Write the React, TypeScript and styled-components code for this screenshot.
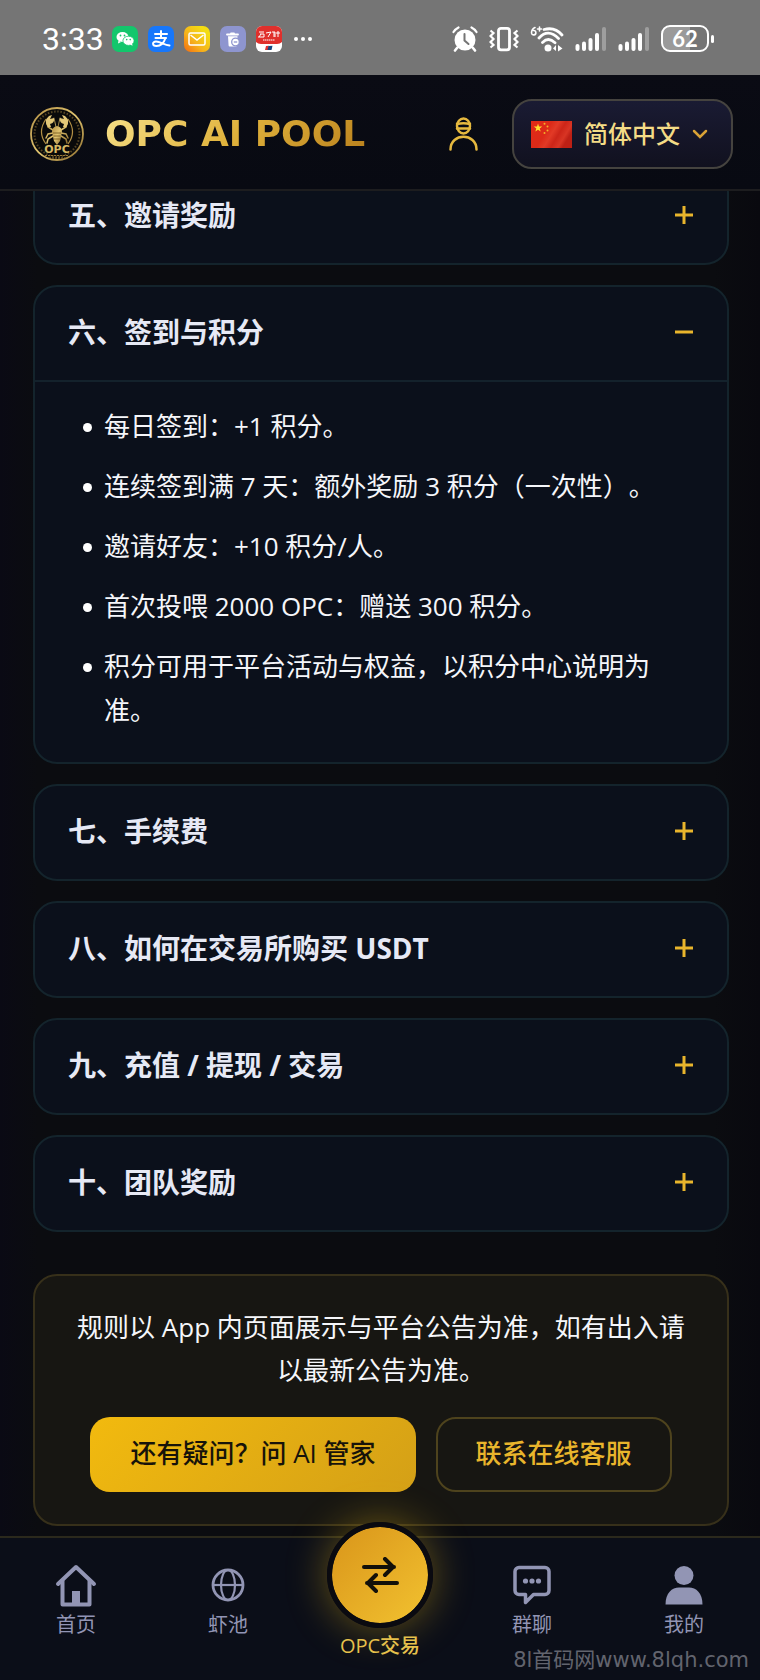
import React, { useState } from 'react';
import styled, { createGlobalStyle, css } from 'styled-components';

const GOLD = '#e9b52c';
const MUTED = '#9295b4';

type Rule = { id: string; title: string; items: string[] };

const RULES: Rule[] = [
  { id: 'invite', title: '五、邀请奖励', items: ['邀请好友完成投喂，即可获得奖励。'] },
  {
    id: 'points',
    title: '六、签到与积分',
    items: [
      '每日签到：+1 积分。',
      '连续签到满 7 天：额外奖励 3 积分（一次性）。',
      '邀请好友：+10 积分/人。',
      '首次投喂 2000 OPC：赠送 300 积分。',
      '积分可用于平台活动与权益，以积分中心说明为准。',
    ],
  },
  { id: 'fee', title: '七、手续费', items: ['手续费以页面展示为准。'] },
  { id: 'usdt', title: '八、如何在交易所购买 USDT', items: ['在交易所完成认证后购买 USDT。'] },
  { id: 'trade', title: '九、充值 / 提现 / 交易', items: ['充值、提现与交易以页面展示为准。'] },
  { id: 'team', title: '十、团队奖励', items: ['团队奖励以平台公告为准。'] },
];

const GlobalStyle = createGlobalStyle`
  * {
    box-sizing: border-box;
  }

  body {
    margin: 0;
    background: #0a0b10;
    color: #f5f6fa;
    font-family: 'Open Sans', 'Noto Sans CJK SC', sans-serif;
    text-spacing-trim: space-all;
  }

  button {
    font-family: inherit;
    cursor: pointer;
  }
`;

const Screen = styled.div`
  min-height: 100vh;
  display: flex;
  flex-direction: column;
  overflow: hidden;
  background: linear-gradient(90deg, #0a0a14 0%, #0b0c10 5%, #0b0c10 94%, #09090f 100%);
`;

/* STATUS BAR */

const StatusBar = styled.div`
  height: 75px;
  padding: 2px 46px 0 42px;
  display: flex;
  align-items: center;
  justify-content: space-between;
  background: #757575;
  color: #fff;
`;

const StatusGroup = styled.div<{ $gap: number }>`
  display: flex;
  align-items: center;
  gap: ${props => props.$gap}px;
`;

const Clock = styled.time`
  margin-right: -2px;
  font: 400 32px/40px Roboto, sans-serif;
`;

const Battery = styled.div`
  display: flex;
  align-items: center;
  gap: 2px;

  &::after {
    content: '';
    width: 3px;
    height: 8px;
    border-radius: 2px;
    background: #fff;
  }
`;

const BatteryBody = styled.span`
  width: 48px;
  height: 27px;
  display: grid;
  place-items: center;
  border: 2px solid #fff;
  border-radius: 9px;
  background: linear-gradient(90deg, #9a9a9a 62%, #757575 62%);
  font: 700 22px/22px Lato, sans-serif;
`;

/* HEADER */

const Header = styled.header`
  position: relative;
  z-index: 2;
  height: 116px;
  padding: 4px 27px 0 29px;
  display: flex;
  align-items: center;
  justify-content: space-between;
  border-bottom: 2px solid #1d1d1f;
  background: linear-gradient(180deg, #0a0b14, #080a12);
`;

const Brand = styled.a`
  display: flex;
  align-items: center;
  gap: 20px;
  text-decoration: none;
`;

const BrandName = styled.span`
  font: 700 36px/44px 'DejaVu Sans', sans-serif;
  background: linear-gradient(135deg, #f6e08a 0%, #e0b23c 50%, #b9801c 100%);
  background-clip: text;
  color: transparent;
`;

const HeaderActions = styled.div`
  display: flex;
  align-items: center;
  gap: 34px;
`;

const IconButton = styled.button`
  padding: 0;
  display: flex;
  border: 0;
  background: none;
`;

const LanguageButton = styled.button`
  height: 70px;
  padding: 0 23px 0 17px;
  display: flex;
  align-items: center;
  gap: 12px;
  border: 2px solid #45433f;
  border-radius: 20px;
  background: linear-gradient(180deg, #1a1b33, #11111f);
  color: #f4dc86;
  font-size: 24px;
  line-height: 36px;
  font-weight: 500;
`;

/* RULES */

const Content = styled.main`
  flex: 1;
  margin-top: -23px;
  padding: 0 31px 10px 33px;
`;

const RuleList = styled.div`
  display: flex;
  flex-direction: column;
  gap: 20px;
`;

const RuleCard = styled.section`
  border: 2px solid #14242c;
  border-radius: 24px;
  background: #0b101b;
`;

const RuleHeading = styled.h2`
  margin: 0;
`;

const RuleToggle = styled.button`
  width: 100%;
  height: 93px;
  padding: 0 33px 3px;
  display: flex;
  align-items: center;
  justify-content: space-between;
  border: 0;
  background: none;
  color: #e6e9f5;
  font-size: 28px;
  line-height: 42px;
  font-weight: 700;
`;

const RuleBody = styled.ul`
  margin: 0;
  padding: 22px 32px 30px 48px;
  display: flex;
  flex-direction: column;
  gap: 16px;
  border-top: 2px solid #14222c;
  list-style: none;
  font-size: 26px;
  line-height: 44px;
`;

const RuleLine = styled.li`
  display: flex;
  gap: 12px;

  &::before {
    content: '';
    flex: none;
    width: 9px;
    height: 9px;
    margin-top: 19px;
    border-radius: 50%;
    background: #fff;
  }
`;

/* CONTACT */

const Notice = styled.section`
  margin-top: 42px;
  padding: 30px 32px 32px;
  border: 2px solid #37301a;
  border-radius: 24px;
  background: #171612;
  text-align: center;
`;

const NoticeText = styled.p`
  margin: 0 0 25px;
  font-size: 26px;
  line-height: 43px;
`;

const NoticeActions = styled.div`
  display: flex;
  justify-content: center;
  gap: 20px;
`;

const ActionButton = styled.button<{ $primary?: boolean }>`
  height: 75px;
  padding: 0 38px 3px;
  border-radius: 20px;
  font-size: 26px;
  line-height: 40px;
  font-weight: 500;
  ${props =>
    props.$primary
      ? css`
          border: 2px solid transparent;
          background: linear-gradient(135deg, #f2ba0e, #d4a017) border-box;
          color: #17130a;
        `
      : css`
          border: 2px solid #4e431d;
          background: none;
          color: ${GOLD};
        `}
`;

/* TAB BAR */

const TabBar = styled.nav`
  position: relative;
  min-height: 144px;
  display: grid;
  grid-template-columns: repeat(5, 1fr);
  border-top: 2px solid #2b291c;
  background: #0b0e18;
`;

const Tab = styled.a<{ $active?: boolean }>`
  padding-top: ${props => (props.$active ? 0 : 25)}px;
  display: flex;
  flex-direction: column;
  align-items: center;
  gap: 3px;
  color: ${props => (props.$active ? '#e6c14c' : MUTED)};
  font-size: 20px;
  line-height: 30px;
  font-weight: ${props => (props.$active ? 500 : 400)};
  text-decoration: none;
`;

const TabIcon = styled.span`
  height: 44px;
  display: grid;
  place-items: center;
`;

const TradeIcon = styled.span`
  width: 106px;
  height: 106px;
  margin-top: -16px;
  display: grid;
  place-items: center;
  border: 5px solid #0a0a10;
  border-radius: 50%;
  background: linear-gradient(135deg, #d9951a, #f2c230) padding-box;
  box-shadow: 0 0 40px rgba(240, 190, 20, 0.4);
`;

const Watermark = styled.span`
  position: absolute;
  right: 11px;
  bottom: 5px;
  color: #62646e;
  font: 400 21px/30px 'DejaVu Sans', 'Noto Sans CJK SC', sans-serif;
`;

/* ICONS */

const AppIcon = ({ children }: { children: React.ReactNode }) => (
  <svg width="26" height="26" viewBox="0 0 26 26" fill="none">
    {children}
  </svg>
);

const WeChatIcon = () => (
  <AppIcon>
    <rect width="26" height="26" rx="7" fill="#13c66c" />
    <ellipse cx="10.5" cy="11" rx="6" ry="5" fill="#fff" />
    <path d="M6.5 14.5 6 17.5l3-1.5z" fill="#fff" />
    <ellipse cx="16.5" cy="14.8" rx="5.6" ry="4.6" fill="#fff" stroke="#13c66c" strokeWidth="0.8" />
    <path d="M18 18.5l2.5 1.2-.4-2.2z" fill="#fff" />
    <g fill="#13c66c">
      <circle cx="8.5" cy="9.5" r="0.9" />
      <circle cx="12.5" cy="9.5" r="0.9" />
      <circle cx="14.7" cy="13.6" r="0.8" />
      <circle cx="18.2" cy="13.6" r="0.8" />
    </g>
  </AppIcon>
);

const AlipayIcon = () => (
  <AppIcon>
    <rect width="26" height="26" rx="7" fill="#1777fb" />
    <g stroke="#fff" strokeWidth="2" strokeLinecap="round">
      <path d="M7 8h12M13 5v6M7.5 12h10.5" />
      <path d="M17.5 12c-1.5 4.5-5 8-9 8-4.5 0-4.5-4.5-.5-4.5 4.5 0 8 3.5 13.5 4" />
    </g>
  </AppIcon>
);

const MailIcon = () => (
  <AppIcon>
    <defs>
      <linearGradient id="mail" x1="1" y1="0" x2="0" y2="1">
        <stop offset="0.2" stopColor="#f3dc12" />
        <stop offset="0.6" stopColor="#f6b31b" />
        <stop offset="1" stopColor="#f46a10" />
      </linearGradient>
    </defs>
    <rect width="26" height="26" rx="7" fill="url(#mail)" />
    <rect x="5" y="7" width="16" height="12" rx="1.5" stroke="#fff" strokeWidth="1.5" />
    <path d="m6.5 9 6.5 5 6.5-5" stroke="#fff" strokeWidth="1.5" />
  </AppIcon>
);

const CleanerIcon = () => (
  <AppIcon>
    <rect width="26" height="26" rx="7" fill="#8e95cf" />
    <path d="M7 8.5h11M11 7.3h3" stroke="#fff" strokeWidth="1.8" strokeLinecap="round" />
    <path d="M8 10.3h9.5l-.6 9.2a1 1 0 0 1-1 .9H9.6a1 1 0 0 1-1-.9z" fill="#fff" />
    <circle cx="15.5" cy="16" r="3.8" fill="#fff" stroke="#8e95cf" strokeWidth="1.3" />
    <path d="M13.8 16h3.4" stroke="#8e95cf" strokeWidth="1.3" />
  </AppIcon>
);

const PayIcon = () => (
  <AppIcon>
    <rect width="26" height="26" rx="6" fill="#fff" />
    <path d="M0 6a6 6 0 0 1 6-6h14a6 6 0 0 1 6 6v10q-2 2-5 2H5q-3 0-5-2z" fill="#e0302c" />
    <path d="M3 6h5M2 11h6M5 8l-2 3M4 8h4v3M10 7l5-1-3 5M16 6h3v5M18 6v5M20 7h4M22 5v6" stroke="#fff" />
    <path d="M7 14h12" stroke="#fff" strokeDasharray="1.5 0.5" />
    <path d="m10 20 3-.2-1 4.2h-3z" fill="#d33" />
    <path d="m12.5 20 4-.2-1 4.2h-4z" fill="#14477f" />
  </AppIcon>
);

const MoreDots = () => (
  <svg width="20" height="6" fill="#fff">
    <circle cx="4" cy="3" r="2" />
    <circle cx="11" cy="3" r="2" />
    <circle cx="18" cy="3" r="2" />
  </svg>
);

const AlarmIcon = () => (
  <svg width="26" height="26" viewBox="0 0 26 26" fill="none" stroke="#fff" strokeLinecap="round">
    <circle cx="13" cy="14" r="10.5" fill="#fff" stroke="none" />
    <path d="M1.5 6q2-3 5-4.5M24.5 6q-2-3-5-4.5" strokeWidth="2.2" />
    <path d="m5 22-2 2.5M21 22l2 2.5" strokeWidth="2.6" />
    <path d="M12.5 8v6.5l4 3.5" stroke="#757575" strokeWidth="2" />
  </svg>
);

const VibrateIcon = () => (
  <svg width="30" height="26" viewBox="0 0 30 26" fill="none" stroke="#fff" strokeWidth="2.8">
    <rect x="9.5" y="2.3" width="11" height="21.5" rx="2.5" />
    <path d="m1.5 4.5 3 2.5-3 3 3 3-3 3 3 3-3 2.5M28.5 4.5l-3 2.5 3 3-3 3 3 3-3 3 3 2.5" strokeWidth="2.2" />
  </svg>
);

const WifiIcon = () => (
  <svg width="34" height="26" viewBox="0 0 34 26" fill="none" stroke="#fff" strokeLinecap="round" strokeWidth="2.8">
    <path d="M14 3.5q11-3 18 5.5M9 12q9-10 19.5.5M12.5 16.5q6-6 12.5.2" />
    <circle cx="18" cy="22" r="3.5" fill="#fff" stroke="none" />
    <path d="m23 22.5 3-3.5v6zM32.5 22.5 28 19v6.5z" fill="#fff" stroke="none" />
    <path d="M5 1.5Q1.5 3 1.5 7a2.2 2.2 0 1 0 2-2.5M7.5 3h4M9.5 1v4" strokeWidth="1.6" />
  </svg>
);

const SignalIcon = () => (
  <svg width="32" height="26" viewBox="0 0 32 26" fill="#fff">
    <rect x="0.5" y="18" width="4" height="7" rx="2" />
    <rect x="7" y="15.5" width="4" height="9.5" rx="2" />
    <rect x="13.5" y="12" width="4" height="13" rx="2" />
    <rect x="20" y="7" width="4" height="18" rx="2" />
    <rect x="27" y="1" width="4" height="24" rx="2" opacity="0.3" />
  </svg>
);

const LobsterLogo = () => (
  <svg width="56" height="56" viewBox="0 0 56 56" fill="none">
    <defs>
      <linearGradient id="logo" x1="0" y1="0" x2="1" y2="1">
        <stop stopColor="#b28f45" />
        <stop offset="0.5" stopColor="#e0c470" />
        <stop offset="1" stopColor="#8a6a2c" />
      </linearGradient>
    </defs>
    <circle cx="28" cy="28" r="26" fill="#0a0a0a" stroke="url(#logo)" strokeWidth="1.8" />
    <circle cx="28" cy="28" r="22.5" stroke="#77602f" strokeWidth="2" strokeDasharray="1.5 1.7" opacity="0.7" />
    <path d="M17 13q-9 13 0 25M39 13q9 13 0 25" stroke="#b28f45" strokeWidth="1.2" />
    <g stroke="url(#logo)" strokeLinecap="round" strokeWidth="1.5">
      <path d="m24 24-5-3-1-4M32 24l5-3 1-4M24 27l-5 1-2 4M32 27l5 1 2 4M24 30l-5 3-1 4M32 30l5 3 1 4" />
      <path d="M27 21 25 12M29 21l2-9" strokeWidth="0.8" />
    </g>
    <path
      d="M19 21q-5-6 1-11l3-1-2 4 4-1q1 5-4 6l1 3zM37 21q5-6-1-11l-3-1 2 4-4-1q-1 5 4 6l-1 3z"
      fill="#e3c878"
    />
    <path d="M28 20q5 1 5 6l-2 9-3 4-3-4-2-9q0-5 5-6z" fill="url(#logo)" />
    <path d="M24 27h8M24.5 30h7M25 33h6" stroke="#6c511b" strokeWidth="0.8" />
    <path d="M16 49.5h24M20 52h16" stroke="#9a7937" strokeDasharray="2 1" />
    <text x="28" y="47" textAnchor="middle" fontFamily="DejaVu Sans" fontWeight="700" fontSize="11" fill="#d7b964">
      OPC
    </text>
  </svg>
);

const AccountIcon = () => (
  <svg width="29" height="34" viewBox="0 0 29 34" fill="none" stroke="#e6b93f" strokeWidth="2.5" strokeLinecap="round">
    <ellipse cx="14.5" cy="9" rx="6.5" ry="7.5" />
    <path d="M8 7q6.5-1.5 13 0M8 11.5h13" />
    <path d="M1.5 32.5c0-17 26-17 26 0" />
  </svg>
);

const ChinaFlag = () => (
  <svg width="41" height="27" viewBox="0 0 41 27">
    <defs>
      <linearGradient id="flag" x1="0" y1="0" x2="1" y2="0.4">
        <stop stopColor="#e32a17" />
        <stop offset="0.45" stopColor="#dc2a18" />
        <stop offset="0.6" stopColor="#e23a26" />
        <stop offset="0.75" stopColor="#cc2518" />
        <stop offset="0.9" stopColor="#d83524" />
        <stop offset="1" stopColor="#bd2015" />
      </linearGradient>
    </defs>
    <rect width="41" height="27" fill="url(#flag)" />
    <path d="m7 2.5 1 3h3.2l-2.5 2 1 3L7 8.7l-2.7 1.8 1-3-2.5-2H6z" fill="#ffdf2e" />
    <g fill="#f3b02a">
      <circle cx="13.5" cy="2.8" r="1" />
      <circle cx="16.5" cy="5.5" r="1" />
      <circle cx="16.5" cy="9.5" r="1" />
      <circle cx="13.5" cy="12" r="1" />
    </g>
  </svg>
);

const Chevron = () => (
  <svg width="16" height="10" viewBox="0 0 16 10" fill="none" stroke="#d9a236" strokeWidth="2.5" strokeLinecap="round">
    <path d="m2 2 6 6 6-6" />
  </svg>
);

const ToggleMark = ({ open }: { open: boolean }) => (
  <svg width="20" height="20" viewBox="0 0 20 20" stroke={GOLD} strokeWidth="3">
    <path d={open ? 'M1 10h18' : 'M1 10h18M10 1v18'} />
  </svg>
);

const HomeIcon = () => (
  <svg
    width="42"
    height="44"
    viewBox="0 0 42 44"
    fill="none"
    stroke={MUTED}
    strokeWidth="4"
    strokeLinejoin="round"
    strokeLinecap="round"
  >
    <path d="M3 21 21 4l18 17" />
    <path d="M7.5 18v23.5h27V18" />
    <path d="M17 28h8v13h-8z" fill={MUTED} stroke="none" />
  </svg>
);

const GlobeIcon = () => (
  <svg width="34" height="34" viewBox="0 0 34 34" fill="none" stroke={MUTED} strokeWidth="2.2">
    <circle cx="17" cy="17" r="15" strokeWidth="2.8" />
    <ellipse cx="17" cy="17" rx="7" ry="15" />
    <path d="M2 17h30" />
  </svg>
);

const ChatIcon = () => (
  <svg width="38" height="40" viewBox="0 0 38 40" fill="none" stroke={MUTED} strokeWidth="3.5" strokeLinejoin="round">
    <path d="M6 2.5h26a4 4 0 0 1 4 4v19a4 4 0 0 1-4 4H20.5l-8 8v-8H6a4 4 0 0 1-4-4v-19a4 4 0 0 1 4-4z" />
    <g fill={MUTED} stroke="none">
      <circle cx="12.5" cy="16" r="2.6" />
      <circle cx="19" cy="16" r="2.6" />
      <circle cx="25.5" cy="16" r="2.6" />
    </g>
  </svg>
);

const ProfileIcon = () => (
  <svg width="38" height="40" viewBox="0 0 38 40" fill={MUTED}>
    <circle cx="19" cy="10.5" r="9.5" />
    <path d="M0.5 39.5C0.5 28 7 22.5 14 22.5h10c7 0 13.5 5.5 13.5 17z" />
  </svg>
);

const SwapIcon = () => (
  <svg
    width="38"
    height="36"
    viewBox="0 0 38 36"
    fill="none"
    stroke="#12100a"
    strokeWidth="4"
    strokeLinecap="round"
    strokeLinejoin="round"
  >
    <path d="M3 10h30M24 2l8 8-8 8" />
    <path d="M36 26H6M15 18l-8 8 8 8" />
  </svg>
);

const RuleItem = ({ rule, defaultOpen }: { rule: Rule; defaultOpen: boolean }) => {
  const [open, setOpen] = useState(defaultOpen);

  return (
    <RuleCard>
      <RuleHeading>
        <RuleToggle aria-expanded={open} onClick={() => setOpen(!open)}>
          {rule.title}
          <ToggleMark open={open} />
        </RuleToggle>
      </RuleHeading>
      {open && (
        <RuleBody>
          {rule.items.map(item => (
            <RuleLine key={item}>{item}</RuleLine>
          ))}
        </RuleBody>
      )}
    </RuleCard>
  );
};

export default function App() {
  return (
    <Screen>
      <GlobalStyle />

      <StatusBar>
        <StatusGroup $gap={10}>
          <Clock>3:33</Clock>
          <WeChatIcon />
          <AlipayIcon />
          <MailIcon />
          <CleanerIcon />
          <PayIcon />
          <MoreDots />
        </StatusGroup>
        <StatusGroup $gap={11}>
          <AlarmIcon />
          <VibrateIcon />
          <WifiIcon />
          <SignalIcon />
          <SignalIcon />
          <Battery>
            <BatteryBody>62</BatteryBody>
          </Battery>
        </StatusGroup>
      </StatusBar>

      <Header>
        <Brand href="#">
          <LobsterLogo />
          <BrandName>OPC AI POOL</BrandName>
        </Brand>
        <HeaderActions>
          <IconButton aria-label="账户">
            <AccountIcon />
          </IconButton>
          <LanguageButton>
            <ChinaFlag />
            简体中文
            <Chevron />
          </LanguageButton>
        </HeaderActions>
      </Header>

      <Content>
        <RuleList>
          {RULES.map(rule => (
            <RuleItem key={rule.id} rule={rule} defaultOpen={rule.id === 'points'} />
          ))}
        </RuleList>

        <Notice>
          <NoticeText>规则以 App 内页面展示与平台公告为准，如有出入请以最新公告为准。</NoticeText>
          <NoticeActions>
            <ActionButton $primary>还有疑问？问 AI 管家</ActionButton>
            <ActionButton>联系在线客服</ActionButton>
          </NoticeActions>
        </Notice>
      </Content>

      <TabBar>
        <Tab href="#home">
          <TabIcon>
            <HomeIcon />
          </TabIcon>
          首页
        </Tab>
        <Tab href="#pool">
          <TabIcon>
            <GlobeIcon />
          </TabIcon>
          虾池
        </Tab>
        <Tab href="#trade" $active>
          <TradeIcon>
            <SwapIcon />
          </TradeIcon>
          OPC交易
        </Tab>
        <Tab href="#chat">
          <TabIcon>
            <ChatIcon />
          </TabIcon>
          群聊
        </Tab>
        <Tab href="#me">
          <TabIcon>
            <ProfileIcon />
          </TabIcon>
          我的
        </Tab>
        <Watermark>8l首码网www.8lqh.com</Watermark>
      </TabBar>
    </Screen>
  );
}
